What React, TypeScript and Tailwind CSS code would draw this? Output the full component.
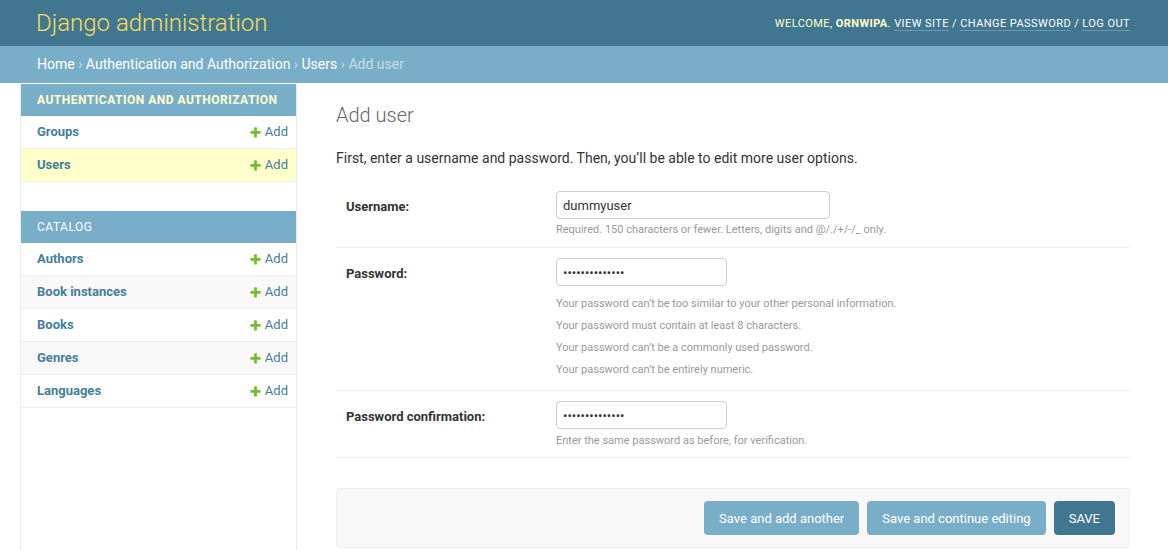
import React from 'react';

const models = {
  auth: [
    { name: 'Groups', current: false },
    { name: 'Users', current: true },
  ],
  catalog: [
    { name: 'Authors' },
    { name: 'Book instances' },
    { name: 'Books' },
    { name: 'Genres' },
    { name: 'Languages' },
  ],
};

function AddIcon() {
  return (
    <svg width="13" height="13" viewBox="0 0 1792 1792" className="shrink-0">
      <path
        fill="#70bf2b"
        d="M1600 796v192q0 40-28 68t-68 28h-416v416q0 40-28 68t-68 28h-192q-40 0-68-28t-28-68v-416h-416q-40 0-68-28t-28-68v-192q0-40 28-68t68-28h416v-416q0-40 28-68t68-28h192q40 0 68 28t28 68v416h416q40 0 68 28t28 68z"
      />
    </svg>
  );
}

function ModelRow({ name, shade, current }: { name: string; shade?: boolean; current?: boolean }) {
  const bg = current ? 'bg-[#ffffcc]' : shade ? 'bg-[#f9f9f9]' : 'bg-white';
  return (
    <div className={`flex items-center justify-between border-b border-[#eeeeee] ${bg} pl-4 pr-2 py-2`}>
      <span className="text-[13px] leading-4 font-bold text-[#447e9b]">{name}</span>
      <span className="flex items-center gap-[3px] text-[13px] leading-4 text-[#447e9b]">
        <AddIcon />
        Add
      </span>
    </div>
  );
}

function Caption({ title, current }: { title: string; current?: boolean }) {
  return (
    <div
      className={`bg-[#79aec8] pl-4 pr-2 py-2 text-[12px] leading-4 uppercase tracking-[0.5px] ${
        current ? 'font-bold text-[#ffffcc]' : 'text-white'
      }`}
    >
      {title}
    </div>
  );
}

function FormRow({
  label,
  children,
  bottom = 'pb-[10px]',
}: {
  label: string;
  children: React.ReactNode;
  bottom?: string;
}) {
  return (
    <div className={`flex border-b border-[#eeeeee] px-[10px] pt-[10px] ${bottom}`}>
      <div className="w-[210px] shrink-0 pt-[2px] text-[13px] leading-[28px] font-bold text-[#333333]">{label}</div>
      <div className="flex flex-col">{children}</div>
    </div>
  );
}

export default function App() {
  return (
    <div className="font-['Roboto','Lucida_Grande','DejaVu_Sans',sans-serif] bg-white text-[#333333]">
      <header className="flex h-[46px] items-center justify-between bg-[#417690] pl-[36px] pr-[38px]">
        <h1 className="text-[24px] font-light leading-[28px] text-[#f5dd5d]">Django administration</h1>
        <div className="text-[11px] uppercase tracking-[0.43px] leading-[13px] text-[#ffffcc]">
          Welcome, <strong className="font-bold">Ornwipa</strong>.{' '}
          <a className="border-b border-white/25 text-white">View site</a> /{' '}
          <a className="border-b border-white/25 text-white">Change password</a> /{' '}
          <a className="border-b border-white/25 text-white">Log out</a>
        </div>
      </header>

      <nav className="h-[37px] bg-[#79aec8] pl-[37px] text-[14px] leading-[37px] text-[#c4dce8]">
        <a className="text-white">Home</a> ›{' '}
        <a className="text-white">Authentication and Authorization</a> ›{' '}
        <a className="text-white">Users</a> › Add user
      </nav>

      <div className="flex min-h-[467px]">
        <div className="w-[21px] shrink-0 border-r border-[#eaeaea] mt-px" />

        <aside className="w-[276px] shrink-0 border-r border-[#eaeaea] pt-px">
          <div className="mb-[29px]">
            <Caption title="Authentication and Authorization" current />
            {models.auth.map((m) => (
              <ModelRow key={m.name} name={m.name} current={m.current} />
            ))}
          </div>
          <div>
            <Caption title="Catalog" />
            {models.catalog.map((m, i) => (
              <ModelRow key={m.name} name={m.name} shade={i % 2 === 1} />
            ))}
          </div>
        </aside>

        <main className="flex-1 pl-[39px] pr-[38px] pt-[20px]">
          <h1 className="text-[20px] font-light leading-[24px] text-[#666666]">Add user</h1>
          <p className="mt-[21px] mb-[13px] text-[14px] leading-[20px] text-[#333333]">
            First, enter a username and password. Then, you’ll be able to edit more user options.
          </p>

          <div>
            <FormRow label="Username:">
              <input
                readOnly
                value="dummyuser"
                className="h-[28px] w-[274px] rounded-[4px] border border-[#cccccc] px-[6px] text-[13px] text-[#333333] outline-none"
              />
              <div className="mt-[4px] text-[11px] leading-[14px] text-[#999999]">
                Required. 150 characters or fewer. Letters, digits and @/./+/-/_ only.
              </div>
            </FormRow>

            <FormRow label="Password:" bottom="pb-[9px]">
              <input
                readOnly
                type="password"
                value="dummypassword1"
                className="h-[28px] w-[171px] rounded-[4px] border border-[#cccccc] px-[6px] text-[13px] text-[#333333] outline-none"
              />
              <ul className="mt-[7px] text-[11px] leading-[22px] text-[#999999]">
                <li>Your password can’t be too similar to your other personal information.</li>
                <li>Your password must contain at least 8 characters.</li>
                <li>Your password can’t be a commonly used password.</li>
                <li>Your password can’t be entirely numeric.</li>
              </ul>
            </FormRow>

            <FormRow label="Password confirmation:" bottom="pb-[9px]">
              <input
                readOnly
                type="password"
                value="dummypassword1"
                className="h-[28px] w-[171px] rounded-[4px] border border-[#cccccc] px-[6px] text-[13px] text-[#333333] outline-none"
              />
              <div className="mt-[5px] text-[11px] leading-[14px] text-[#999999]">
                Enter the same password as before, for verification.
              </div>
            </FormRow>
          </div>

          <div className="mt-[30px] mb-5 flex justify-end gap-2 rounded-[4px] border border-[#eeeeee] bg-[#f8f8f8] px-[14px] py-[12px]">
            <button className="rounded-[4px] bg-[#79aec8] px-[15px] pt-[11px] pb-[9px] text-[13px] leading-[14px] text-white">
              Save and add another
            </button>
            <button className="rounded-[4px] bg-[#79aec8] px-[15px] pt-[11px] pb-[9px] text-[13px] leading-[14px] text-white">
              Save and continue editing
            </button>
            <button className="rounded-[4px] bg-[#417690] px-[15px] pt-[11px] pb-[9px] text-[13px] leading-[14px] uppercase text-white">
              Save
            </button>
          </div>
        </main>
      </div>
    </div>
  );
}
